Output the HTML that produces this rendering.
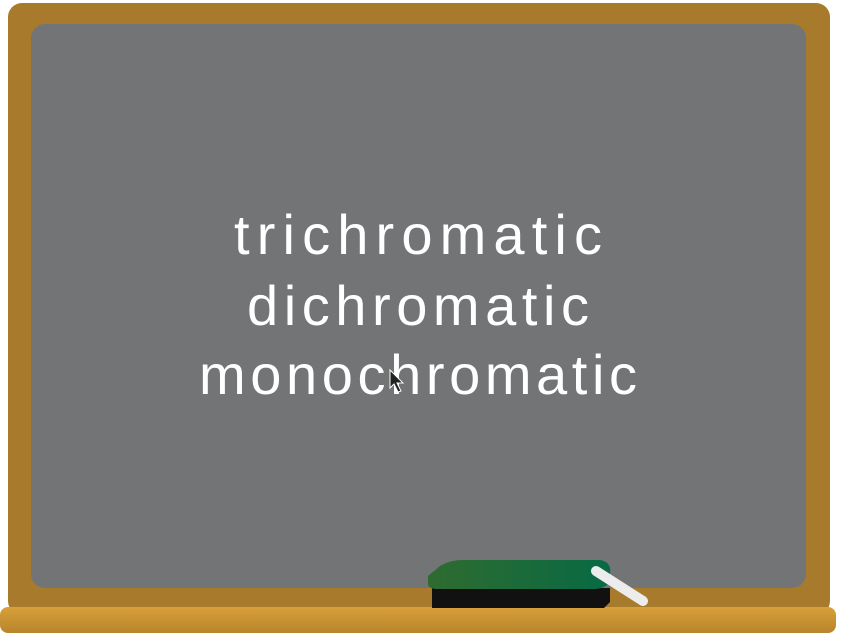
<!DOCTYPE html>
<html><head><style>html,body{margin:0;padding:0;background:#fff;width:843px;height:640px;overflow:hidden}</style></head>
<body>
<svg width="843" height="640" xmlns="http://www.w3.org/2000/svg">
<defs>
<linearGradient id="g" x1="0" x2="1" y1="0" y2="0"><stop offset="0" stop-color="#2f6b2f"/><stop offset="1" stop-color="#086a44"/></linearGradient>
<linearGradient id="s" x1="0" x2="0" y1="0" y2="1"><stop offset="0" stop-color="#d9a03a"/><stop offset="1" stop-color="#b8852c"/></linearGradient>
</defs>
<rect x="8" y="3" width="822" height="612" rx="14" fill="#a87b2c"/>
<rect x="31" y="24" width="775" height="564" rx="14" fill="#727476"/>
<rect x="0" y="607" width="836" height="26" rx="8" fill="url(#s)"/>
<g fill="#fff" font-family="Liberation Sans, sans-serif" font-size="56" font-weight="normal">
<text x="234" y="254" textLength="368" lengthAdjust="spacing">trichromatic</text>
<text x="247" y="325" textLength="342" lengthAdjust="spacing">dichromatic</text>
<text x="199" y="394" textLength="438" lengthAdjust="spacing">monochromatic</text>
</g>
<path d="M390 370 L390 388 L394 384 L398 392 L401 391 L397 383 L403 383 Z" fill="#222" stroke="#fff" stroke-width="1"/>
<path d="M432 588 L610 588 L610 602 L604 608 L432 608 Z" fill="#111"/>
<path d="M440 566 Q450 560 462 560 L600 560 Q612 562 610 574 L610 582 Q604 589 594 589 L436 589 Q428 588 428 584 L428 576 Z" fill="url(#g)"/>
<line x1="596" y1="571" x2="643" y2="601" stroke="#ececec" stroke-width="10" stroke-linecap="round"/>
</svg>
</body></html>
